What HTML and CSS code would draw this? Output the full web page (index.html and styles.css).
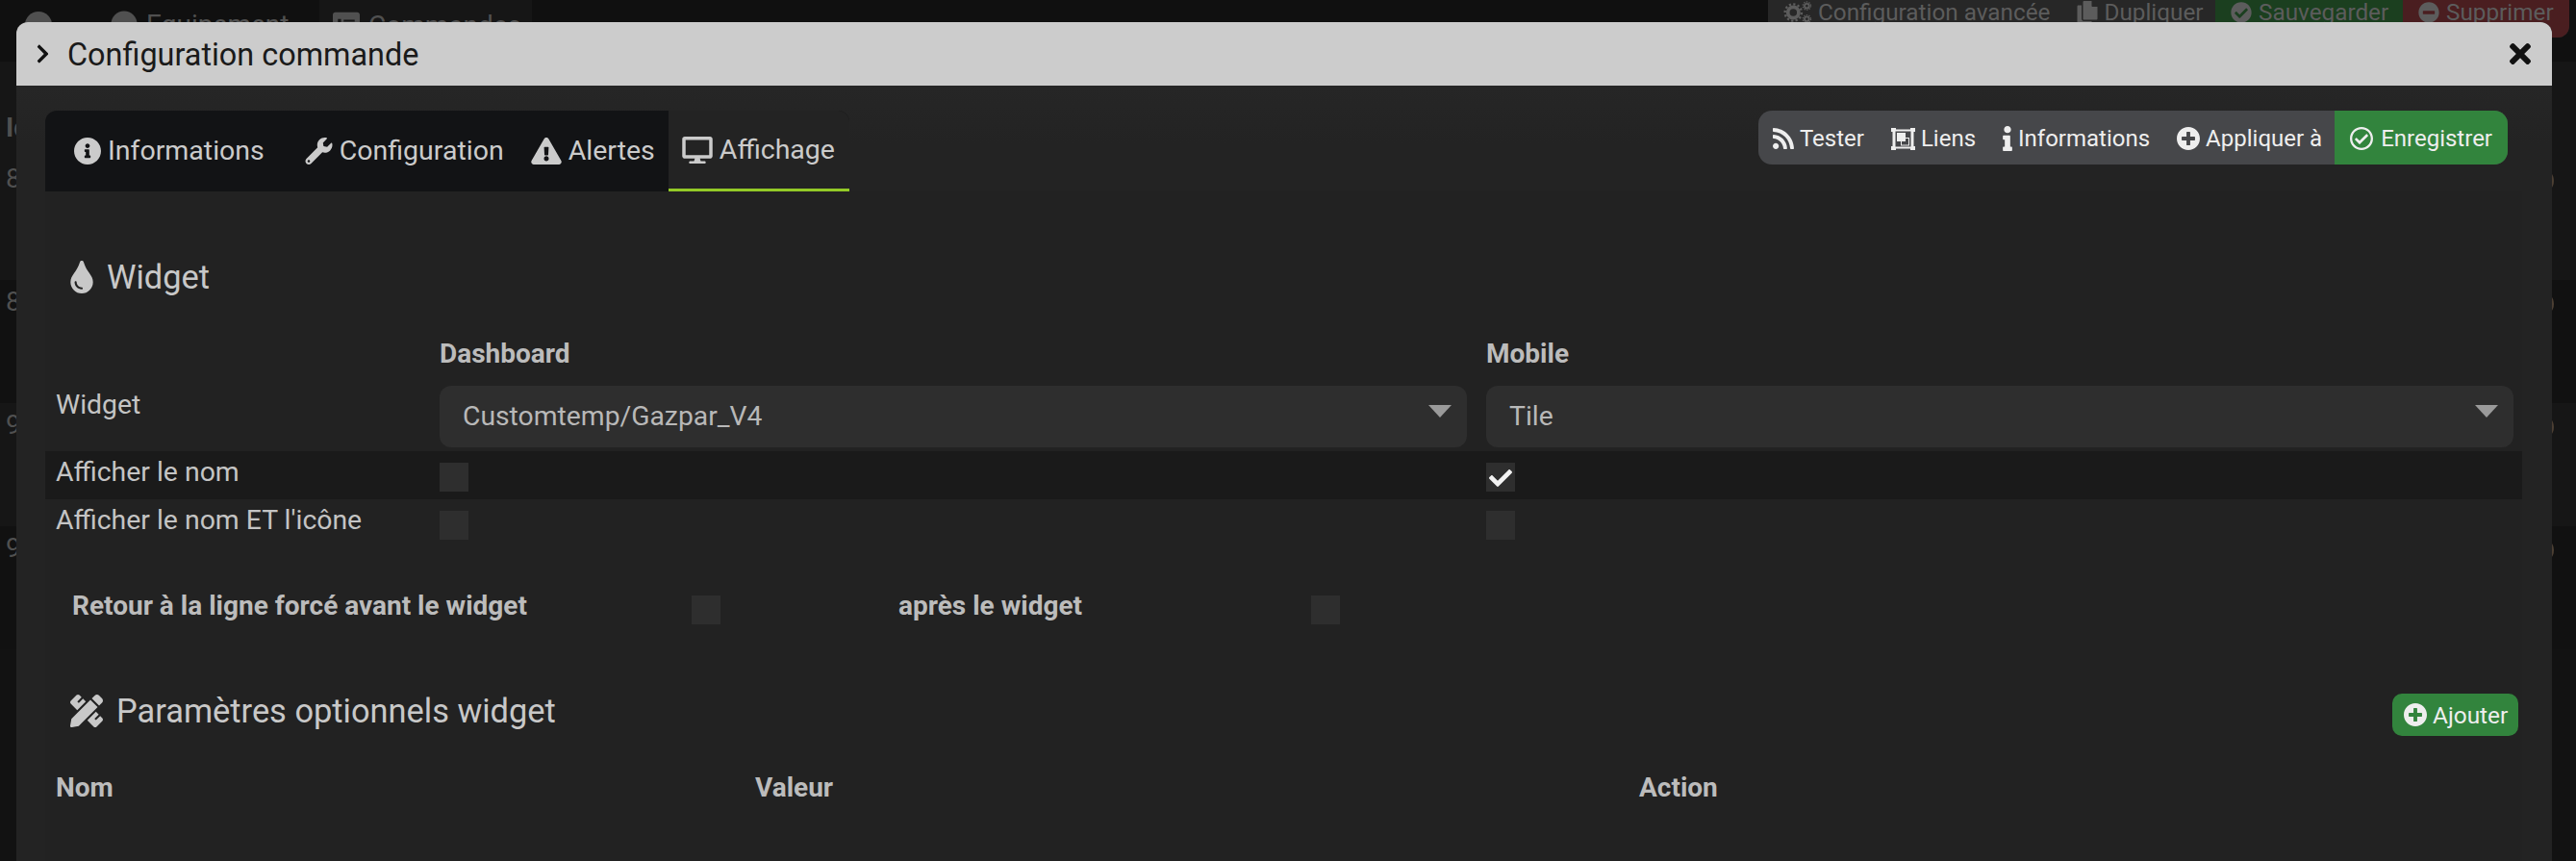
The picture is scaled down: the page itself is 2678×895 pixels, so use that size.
FILE: index.html
```html
<!DOCTYPE html>
<html lang="fr">
<head>
<meta charset="utf-8">
<title>Configuration commande</title>
<link rel="stylesheet" href="styles.css">
</head>
<body>
<div class="page">
  <div class="topbar">
    <div class="nav">
      <span class="nav-back"></span>
      <span class="nav-tab nav-first"><svg class="ic" viewBox="0 0 512 512"><path d="M256 8C119 8 8 119 8 256s111 248 248 248 248-111 248-248S393 8 256 8z"/></svg>Equipement</span>
      <span class="nav-tab nav-active"><svg class="ic" viewBox="0 0 512 512"><path d="M48 32h416c26 0 48 22 48 48v352c0 26-22 48-48 48H48c-26 0-48-22-48-48V80c0-26 22-48 48-48zm48 130v60h60v-60zm0 120v60h60v-60zm110-110v40h210v-40zm0 120v40h210v-40z" fill-rule="evenodd"/></svg>Commandes</span>
    </div>
    <div class="actions">
      <span class="act act-cfg"><svg class="ic" viewBox="0 0 640 512"><g class="gear"><circle cx="220" cy="256" r="120" stroke-width="80"/><circle cx="220" cy="256" r="185" stroke-width="50" stroke-dasharray="48 48"/><circle cx="520" cy="110" r="50" stroke-width="40"/><circle cx="520" cy="110" r="88" stroke-width="30" stroke-dasharray="28 28"/><circle cx="520" cy="400" r="50" stroke-width="40"/><circle cx="520" cy="400" r="88" stroke-width="30" stroke-dasharray="28 28"/></g></svg>Configuration avancée</span>
      <span class="act"><svg class="ic" viewBox="0 0 448 512"><path d="M320 448v40c0 13-11 24-24 24H24c-13 0-24-11-24-24V120c0-13 11-24 24-24h72v296c0 31 25 56 56 56h168zm0-344V0H152c-13 0-24 11-24 24v368c0 13 11 24 24 24h272c13 0 24-11 24-24V128H344c-13 0-24-11-24-24z"/></svg>Dupliquer</span>
      <span class="act act-save"><svg class="ic" viewBox="0 0 512 512"><path d="M504 256c0 137-111 248-248 248S8 393 8 256 119 8 256 8s248 111 248 248zM227 387l184-184c6-6 6-16 0-22l-23-23c-6-6-16-6-22 0L216 308l-70-70c-6-6-16-6-22 0l-23 23c-6 6-6 16 0 22l104 104c6 6 16 6 22 0z"/></svg>Sauvegarder</span>
      <span class="act act-del"><svg class="ic" viewBox="0 0 512 512"><path d="M256 8C119 8 8 119 8 256s111 248 248 248 248-111 248-248S393 8 256 8zM124 296c-7 0-12-5-12-12v-56c0-7 5-12 12-12h264c7 0 12 5 12 12v56c0 7-5 12-12 12z"/></svg>Supprimer</span>
    </div>
  </div>
  <div class="bg-row bg-head"><span class="bg-id">Id</span></div>
  <div class="bg-row bg-light"><span class="bg-num">8</span><span class="bg-dot"></span></div>
  <div class="bg-row"><span class="bg-num">8</span><span class="bg-dot"></span></div>
  <div class="bg-row bg-light"><span class="bg-num">9</span><span class="bg-dot"></span></div>
  <div class="bg-row"><span class="bg-num">9</span><span class="bg-dot"></span></div>
</div>

<section class="modal">
  <header class="modal-head">
    <svg class="chev" viewBox="0 0 320 512"><path d="M285.476 272.971L91.132 467.314c-9.373 9.373-24.569 9.373-33.941 0l-22.667-22.667c-9.357-9.357-9.375-24.522-.04-33.901L188.505 256 34.484 101.255c-9.335-9.379-9.317-24.544.04-33.901l22.667-22.667c9.373-9.373 24.569-9.373 33.941 0L285.475 239.03c9.373 9.372 9.373 24.568.001 33.941z"/></svg>
    <span class="modal-title">Configuration commande</span>
    <svg class="close" viewBox="0 0 352 512"><path d="M242.72 256l100.07-100.07c12.28-12.28 12.28-32.19 0-44.48l-22.24-22.24c-12.28-12.28-32.19-12.28-44.48 0L176 189.28 75.93 89.21c-12.28-12.28-32.19-12.28-44.48 0L9.21 111.45c-12.28 12.28-12.28 32.19 0 44.48L109.28 256 9.21 356.07c-12.28 12.28-12.28 32.19 0 44.48l22.24 22.24c12.28 12.28 32.2 12.28 44.48 0L176 322.72l100.07 100.07c12.28 12.28 32.2 12.28 44.48 0l22.24-22.24c12.28-12.28 12.28-32.19 0-44.48L242.72 256z"/></svg>
  </header>
  <div class="modal-body">
    <div class="tabbar">
      <nav class="tabs">
        <a class="tab tab-first"><svg class="tab-ic ic-info" viewBox="8 8 496 496"><path d="M256 8C119.043 8 8 119.083 8 256c0 136.997 111.043 248 248 248s248-111.003 248-248C504 119.083 392.957 8 256 8zm0 110c23.196 0 42 18.804 42 42s-18.804 42-42 42-42-18.804-42-42 18.804-42 42-42zm56 254c0 6.627-5.373 12-12 12h-88c-6.627 0-12-5.373-12-12v-24c0-6.627 5.373-12 12-12h12v-64h-12c-6.627 0-12-5.373-12-12v-24c0-6.627 5.373-12 12-12h64c6.627 0 12 5.373 12 12v100h12c6.627 0 12 5.373 12 12v24z"/></svg>Informations</a>
        <a class="tab"><svg class="tab-ic ic-wrench" viewBox="0 0 512 512"><path d="M507.73 109.1c-2.24-9.03-13.54-12.09-20.12-5.51l-74.36 74.36-67.88-11.31-11.31-67.88 74.36-74.36c6.62-6.62 3.43-17.9-5.66-20.16-47.38-11.74-99.55.91-136.58 37.93-39.64 39.64-50.55 97.1-34.05 147.2L18.74 402.76c-24.99 24.99-24.99 65.51 0 90.5 24.99 24.99 65.51 24.99 90.5 0l213.21-213.21c50.12 16.71 107.47 5.68 147.37-34.22 37.07-37.07 49.7-89.32 37.91-136.73zM64 472c-13.25 0-24-10.75-24-24 0-13.26 10.75-24 24-24s24 10.74 24 24c0 13.25-10.75 24-24 24z"/></svg>Configuration</a>
        <a class="tab"><svg class="tab-ic ic-warn" viewBox="0 0 576 512"><path d="M569.517 440.013C587.975 472.007 564.806 512 527.94 512H48.054c-36.937 0-59.999-40.055-41.577-71.987L246.423 24.02c18.467-32.009 64.72-31.951 83.154 0l239.94 416.013zM288 354c-25.405 0-46 20.595-46 46s20.595 46 46 46 46-20.595 46-46-20.595-46-46-46zm-43.673-165.346l7.418 136c.347 6.364 5.609 11.346 11.982 11.346h48.546c6.373 0 11.635-4.982 11.982-11.346l7.418-136c.375-6.874-5.098-12.654-11.982-12.654h-63.383c-6.884 0-12.356 5.78-11.981 12.654z"/></svg>Alertes</a>
        <a class="tab tab-active"><svg class="tab-ic ic-desk" viewBox="0 0 576 512"><path d="M528 0H48C21.5 0 0 21.5 0 48v320c0 26.5 21.5 48 48 48h192l-16 48h-72c-13.3 0-24 10.7-24 24s10.7 24 24 24h272c13.3 0 24-10.7 24-24s-10.7-24-24-24h-72l-16-48h192c26.5 0 48-21.5 48-48V48c0-26.5-21.5-48-48-48zm-16 352H64V64h448v288z"/></svg>Affichage</a>
      </nav>
      <div class="tools">
        <a class="tool tool-first"><svg class="tool-ic ic-rss" viewBox="0 32 448 448"><path d="M128.081 415.959c0 35.369-28.672 64.041-64.041 64.041S0 451.328 0 415.959s28.672-64.041 64.041-64.041 64.04 28.673 64.04 64.041zm175.66 47.25c-8.354-154.6-132.185-278.587-286.95-286.95C7.656 175.765 0 183.105 0 192.253v48.069c0 8.415 6.49 15.472 14.887 16.018 111.832 7.284 201.473 96.702 208.772 208.772.547 8.397 7.604 14.887 16.018 14.887h48.069c9.149.001 16.489-7.655 15.995-16.79zm144.249.288C439.596 229.677 251.465 40.445 16.503 32.01 7.473 31.686 0 38.981 0 48.016v48.068c0 8.625 6.835 15.645 15.453 15.999 191.179 7.839 344.627 161.316 352.465 352.465.353 8.618 7.373 15.453 15.999 15.453h48.068c9.034-.001 16.329-7.474 16.005-16.504z"/></svg>Tester</a>
        <a class="tool"><svg class="tool-ic ic-link" viewBox="0 0 25 23"><path fill-rule="evenodd" d="M0 0h5v1.500h15V0h5v4h-1.500v15H25v4h-5v-1.500H5V23H0v-4h1.500V4H0zM4.500 3.500v16h16v-16zM6 5h9v5h4v8.500H10V14H6zM15 11v3h-4v3.500h7V11z"/></svg>Liens</a>
        <a class="tool"><svg class="tool-ic ic-i" viewBox="0 0 192 512"><path d="M20 424.229h20V279.771H20c-11.046 0-20-8.954-20-20V212c0-11.046 8.954-20 20-20h112c11.046 0 20 8.954 20 20v212.229h20c11.046 0 20 8.954 20 20V492c0 11.046-8.954 20-20 20H20c-11.046 0-20-8.954-20-20v-47.771c0-11.046 8.954-20 20-20zM96 0C56.235 0 24 32.235 24 72s32.235 72 72 72 72-32.235 72-72S135.764 0 96 0z"/></svg>Informations</a>
        <a class="tool"><svg class="tool-ic ic-plus" viewBox="8 8 496 496"><path d="M256 8C119 8 8 119 8 256s111 248 248 248 248-111 248-248S393 8 256 8zm144 276c0 6.6-5.4 12-12 12h-92v92c0 6.6-5.4 12-12 12h-56c-6.6 0-12-5.4-12-12v-92h-92c-6.6 0-12-5.4-12-12v-56c0-6.6 5.4-12 12-12h92v-92c0-6.6 5.4-12 12-12h56c6.600 0 12 5.400 12 12v92h92c6.600 0 12 5.400 12 12v56z"/></svg>Appliquer à</a>
        <a class="tool tool-save"><svg class="tool-ic ic-plus" viewBox="8 8 496 496"><path d="M256 8C119.033 8 8 119.033 8 256s111.033 248 248 248 248-111.033 248-248S392.967 8 256 8zm0 48c110.532 0 200 89.451 200 200 0 110.532-89.451 200-200 200-110.532 0-200-89.451-200-200 0-110.532 89.451-200 200-200m140.204 130.267l-22.536-22.718c-4.667-4.705-12.265-4.736-16.97-.068L215.346 303.697l-59.792-60.277c-4.667-4.705-12.265-4.736-16.97-.069l-22.719 22.536c-4.705 4.667-4.736 12.265-.068 16.971l90.781 91.516c4.667 4.705 12.265 4.736 16.97.068l172.589-171.204c4.704-4.668 4.734-12.266.067-16.971z"/></svg>Enregistrer</a>
      </div>
    </div>

    <div class="pane">
      <h3 class="section section-widget"><svg class="sec-ic ic-tint" viewBox="0 0 352 512"><path d="M205.22 22.09c-7.94-28.78-49.44-30.12-58.44 0C100.01 179.85 0 222.72 0 333.91 0 432.35 78.72 512 176 512s176-79.65 176-178.09c0-111.75-99.79-153.34-146.78-311.82zM176 448c-61.75 0-112-50.25-112-112 0-8.84 7.160-16 16-16s16 7.160 16 16c0 44.110 35.890 80 80 80 8.840 0 16 7.160 16 16s-7.160 16-16 16z"/></svg>Widget</h3>

      <div class="grid grid-head"><span></span><b class="th">Dashboard</b><b class="th">Mobile</b></div>
      <div class="grid grid-select">
        <span class="label label-top">Widget</span>
        <div class="select">Customtemp/Gazpar_V4</div>
        <div class="select">Tile</div>
      </div>
      <div class="grid grid-check grid-dark">
        <span class="label">Afficher le nom</span>
        <span class="cb"></span>
        <span class="cb"><svg class="check" viewBox="0 0 512 512"><path d="M173.898 439.404l-166.4-166.4c-9.997-9.997-9.997-26.206 0-36.204l36.203-36.204c9.997-9.998 26.207-9.998 36.204 0L192 312.69 432.095 72.596c9.997-9.997 26.207-9.997 36.204 0l36.203 36.204c9.997 9.997 9.997 26.206 0 36.204l-294.4 294.401c-9.998 9.997-26.207 9.997-36.204-.001z"/></svg></span>
      </div>
      <div class="grid grid-check">
        <span class="label">Afficher le nom ET l'icône</span>
        <span class="cb"></span>
        <span class="cb"></span>
      </div>

      <div class="breaks">
        <b class="break-a">Retour à la ligne forcé avant le widget</b>
        <span class="cb"></span>
        <b class="break-b">après le widget</b>
        <span class="cb"></span>
      </div>

      <div class="params-head">
        <h3 class="section"><svg class="sec-ic ic-ruler" viewBox="0 0 512 512"><path d="M109.46 244.04l134.58-134.56-44.12-44.12-61.68 61.68a7.919 7.919 0 0 1-11.21 0l-11.21-11.21c-3.1-3.1-3.1-8.12 0-11.21l61.68-61.68-33.64-33.65C131.47-3.1 111.39-3.1 99 9.29L9.29 99c-12.38 12.39-12.39 32.47 0 44.86l100.17 100.18zm388.47-116.8c18.76-18.76 18.75-49.17 0-67.93l-45.25-45.25c-18.76-18.76-49.18-18.76-67.95 0l-46.02 46.01 113.2 113.2 46.02-46.03zM316.08 82.71l-297 296.96L.32 487.11c-2.53 14.49 10.09 27.11 24.59 24.56l107.45-18.84L429.28 195.9 316.08 82.71zm186.63 285.43l-33.64-33.64-61.68 61.68c-3.1 3.1-8.12 3.1-11.21 0l-11.21-11.21c-3.09-3.1-3.09-8.12 0-11.21l61.68-61.68-44.14-44.14L267.93 402.5l100.21 100.2c12.39 12.39 32.47 12.39 44.86 0l89.71-89.7c12.39-12.39 12.39-32.47 0-44.86z"/></svg>Paramètres optionnels widget</h3>
        <a class="add"><svg class="add-ic" viewBox="8 8 496 496"><path d="M256 8C119 8 8 119 8 256s111 248 248 248 248-111 248-248S393 8 256 8zm144 276c0 6.6-5.4 12-12 12h-92v92c0 6.6-5.4 12-12 12h-56c-6.6 0-12-5.4-12-12v-92h-92c-6.6 0-12-5.4-12-12v-56c0-6.6 5.4-12 12-12h92v-92c0-6.6 5.4-12 12-12h56c6.600 0 12 5.400 12 12v92h92c6.600 0 12 5.400 12 12v56z"/></svg>Ajouter</a>
      </div>
      <div class="params-cols"><b class="col-nom">Nom</b><b class="col-val">Valeur</b><b>Action</b></div>
    </div>
  </div>
</section>
</body>
</html>
```
FILE: styles.css
```css
* { box-sizing: border-box; }
html, body { margin: 0; height: 895px; overflow: hidden; }
body { background: #121212; font-family: Roboto, "Liberation Sans", sans-serif; color: #c8c8c8; position: relative; }

/* page behind the modal */
.page { height: 895px; overflow: hidden; display: flex; flex-direction: column; color: #505050; }
.topbar { height: 64px; display: flex; justify-content: space-between; align-items: flex-start; background: #101010; flex: none; }
.nav { display: flex; align-items: flex-start; font-size: 28px; height: 64px; }
.nav-back { width: 28px; height: 28px; border-radius: 50%; background: #505050; margin: 12px 0 0 26px; }
.nav-tab { display: flex; align-items: center; gap: 9px; height: 30px; margin-top: 10px; }
.nav-first { margin-left: 61px; width: 217px; }
.nav-active { background: #161616; width: 221px; height: 64px; margin-top: 0; padding: 10px 14px 0; align-items: flex-start; }
.ic { width: 28px; height: 28px; fill: #505050; flex: none; }
.nav-active .ic { margin-top: 1px; }
.actions { display: flex; width: 833px; margin-right: 7px; height: 39px; font-size: 24.3px; background: #272727; border-radius: 0 0 12px 12px; overflow: hidden; padding-left: 2px; }
.act { display: flex; align-items: flex-start; gap: 6px; height: 39px; padding: 1px 4px 0 14px; line-height: 24px; color: #5c5c5c; white-space: nowrap; }
.act .ic { width: 22px; height: 24px; fill: #5c5c5c; }
.act-cfg { padding-right: 14px; }
.act-cfg .ic { width: 30px; }
.gear circle { fill: none; stroke: #5c5c5c; }
.act-save { background: #1b3f1f; margin-left: auto; padding: 1px 0 0 16px; width: 195px; gap: 7px; flex: none; }
.act-del { background: #4a1e20; padding: 1px 0 0 16px; width: 173px; gap: 7px; flex: none; }
.bg-row { height: 128px; flex: none; display: flex; justify-content: space-between; align-items: flex-start; font-size: 28px; line-height: 30px; padding: 8px 23px 0 6px; background: #111; }
.bg-dot { width: 26px; height: 26px; border-radius: 50%; background: #4c3f33; margin-top: 4px; }
.bg-light { background: #161616; }
.bg-head { height: 99px; background: #161616; padding-top: 54px; font-weight: 700; }

/* modal */
.modal { position: absolute; left: 17px; top: 23px; width: 2636px; height: 872px; background: #262626; border-radius: 12px 12px 0 0; overflow: hidden; display: flex; flex-direction: column; }
.modal-head { flex: none; height: 66px; background: #cccccc; color: #1a1a1a; display: flex; align-items: center; padding: 0 22px 0 20px; }
.chev { width: 15px; height: 22px; fill: #111; margin-right: 18px; flex: none; }
.modal-title { font-size: 32.4px; flex: 1; padding-top: 2px; }
.close { width: 22px; height: 32px; fill: #111; flex: none; }
.modal-body { flex: 1; padding: 26px 31px 0 30px; display: flex; flex-direction: column; background: linear-gradient(#262626, #232323 60px); }
.tabbar { display: flex; justify-content: space-between; align-items: flex-start; height: 84px; flex: none; }
.tabs { display: flex; height: 84px; background: #121315; border-radius: 12px 12px 0 0; overflow: hidden; }
.tab { display: flex; align-items: center; gap: 7px; padding: 0 14px 1px; font-size: 28.5px; color: #cbcbcb; height: 84px; white-space: nowrap; }
.tab-first { padding-left: 30px; padding-right: 28px; }
.tab-active { background: #232323; border-bottom: 3px solid #93ca27; padding-bottom: 0; width: 188px; }
.tab-ic { fill: #cbcbcb; flex: none; height: 28px; }
.ic-info { width: 28px; }
.ic-wrench { width: 29px; }
.ic-warn { width: 32px; }
.ic-desk { width: 32px; }
.tools { display: flex; height: 56px; background: #46474a; border-radius: 14px; overflow: hidden; margin-right: 15px; }
.tool { display: flex; align-items: center; gap: 6px; padding: 2px 14px 0; font-size: 24px; color: #eeeeee; white-space: nowrap; }
.tool-first { padding-left: 15px; }
.tool-save { background: #32843d; padding: 2px 16px 0; gap: 8px; margin-left: -1px; }
.tool-ic { fill: #eeeeee; flex: none; }
.ic-rss { width: 22px; height: 22px; }
.ic-link { width: 25px; height: 23px; }
.ic-i { width: 10px; height: 26px; }
.ic-plus { width: 24px; height: 24px; }

.pane { flex: 1; background: #222222; width: 2575px; }
.section { margin: 0; font-weight: 400; font-size: 34.4px; color: #c8c8c8; display: flex; align-items: center; gap: 14px; padding-left: 26px; line-height: 40px; height: 40px; }
.section-widget { margin-top: 69px; }
.sec-ic { fill: #c8c8c8; flex: none; }
.ic-tint { width: 24px; height: 34px; }
.ic-ruler { width: 34px; height: 34px; }
.grid { display: grid; grid-template-columns: 390px 1068px 1068px; column-gap: 20px; align-items: start; }
.grid-head { margin-top: 45px; height: 30px; line-height: 30px; align-items: center; }
.th { font-weight: 700; color: #bcbcbc; font-size: 28px; }
.grid-select { margin-top: 18px; height: 68px; }
.label { padding-left: 11px; font-size: 28.4px; line-height: 30px; color: #c4c4c4; display: block; }
.label-top { padding-top: 5px; }
.select { position: relative; height: 64px; line-height: 64px; background: #2e2e2e; border-radius: 12px; padding-left: 24px; font-size: 28.3px; color: #b8b8b8; }
.select::after { content: ""; position: absolute; right: 16px; top: 20px; border-left: 12px solid transparent; border-right: 12px solid transparent; border-top: 13px solid #9a9a9a; }
.grid-check { height: 50px; }
.grid-check .label { margin-top: 7px; }
.grid-check .cb { margin-top: 12px; }
.grid-dark { background: #1a1a1a; }
.cb { display: block; width: 30px; height: 30px; background: #2e2e2e; position: relative; flex: none; }
.check { position: absolute; left: 0; top: 4px; width: 30px; height: 24px; fill: #f2f2f2; }
.breaks { display: flex; align-items: center; height: 30px; margin-top: 50px; font-size: 28px; color: #bcbcbc; padding-left: 28px; }
.breaks b { font-weight: 700; white-space: nowrap; margin-bottom: 10px; }
.break-a { width: 644px; }
.break-b { margin-left: 185px; width: 429px; }
.params-head { display: flex; justify-content: space-between; align-items: flex-start; margin-top: 72px; padding-right: 4px; }
.params-head .section { margin-top: -5px; height: 46px; }
.add { display: flex; align-items: center; gap: 6px; height: 44px; width: 131px; padding-left: 12px; background: #32843d; border-radius: 10px; color: #eeeeee; font-size: 24.4px; }
.add-ic { width: 24px; height: 24px; fill: #eeeeee; }
.params-cols { display: grid; grid-template-columns: 727px 919px auto; padding-left: 11px; margin-top: 39px; font-size: 28px; line-height: 30px; color: #bcbcbc; }
.params-cols b { font-weight: 700; }
```
